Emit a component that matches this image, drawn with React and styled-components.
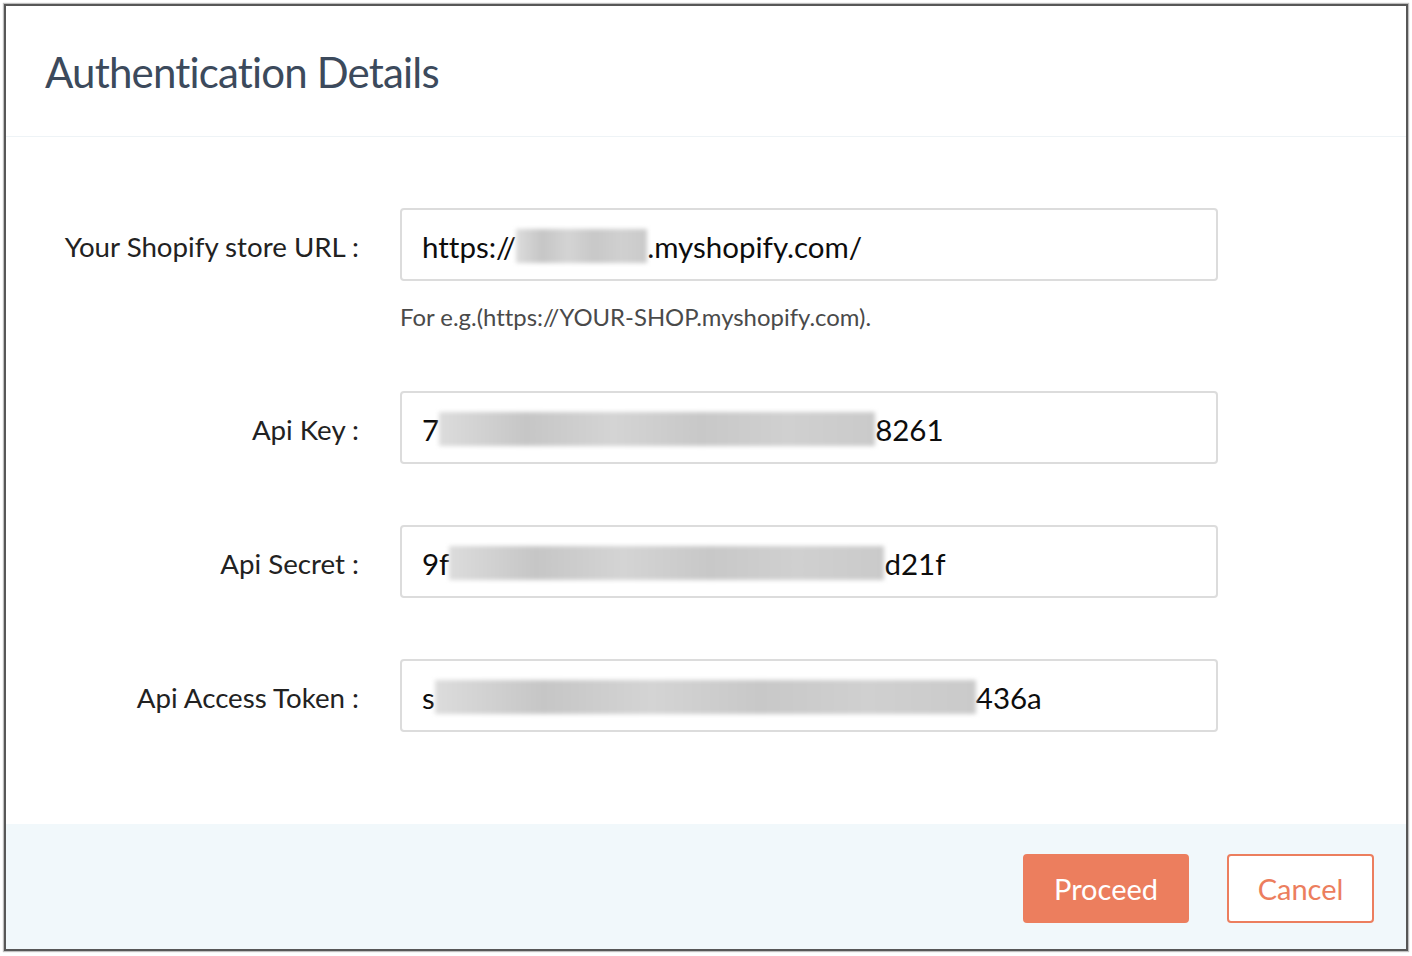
import React from "react";
import styled, { createGlobalStyle } from "styled-components";

const Global = createGlobalStyle`
  html, body { margin: 0; padding: 0; background: #ffffff; }
  body { font-family: Lato, "Open Sans", sans-serif; font-variant-ligatures: none; }
  * { box-sizing: border-box; }
`;

const Page = styled.div`
  width: 1412px;
  height: 956px;
  padding: 4px 4px 5px 4px;
  background: #ffffff;
`;

const Dialog = styled.div`
  height: 100%;
  border: 2px solid #575757;
  box-shadow: 0 0 1px 1px rgba(0, 0, 0, 0.25);
  background: #ffffff;
  display: flex;
  flex-direction: column;
`;

const Header = styled.div`
  height: 131px;
  display: flex;
  align-items: center;
  padding-left: 39px;
  border-bottom: 1px solid #eef3f6;
`;

const Title = styled.h1`
  margin: 0;
  font-family: Lato, sans-serif;
  font-weight: 400;
  font-size: 42px;
  color: #3c4a5c;
  letter-spacing: -0.82px;
  padding-top: 2px;
`;

const Body = styled.div`
  flex: 1;
  padding-top: 71px;
  display: flex;
  flex-direction: column;
  gap: 61px;
`;

const Row = styled.div`
  display: grid;
  grid-template-columns: 353px 818px;
  column-gap: 41px;
  align-items: start;
`;

const Label = styled.label`
  height: 73px;
  display: flex;
  align-items: center;
  justify-content: flex-end;
  font-size: 27.7px;
  color: #222222;
  padding-top: 3px;
`;

const FieldCol = styled.div`
  display: flex;
  flex-direction: column;
`;

const Field = styled.div`
  height: 73px;
  border: 2px solid #dcdcdc;
  border-radius: 4px;
  display: flex;
  align-items: center;
  padding-left: 20px;
  padding-top: 3px;
  font-size: 29.5px;
  color: #0d0d0d;
  white-space: nowrap;
`;

const Blur = styled.span`
  display: inline-block;
  width: ${(p) => p.$w}px;
  height: 34px;
  background: linear-gradient(90deg, #dcdcdc, #c6c6c6 20%, #d4d4d4 40%, #c8c8c8 60%, #d0d0d0 80%, #cacaca);
  filter: blur(2px);
`;

const Hint = styled.div`
  margin-top: 21px;
  margin-bottom: -3px;
  font-size: 23.9px;
  color: #4a4a4a;
  height: 31px;
`;

const Footer = styled.div`
  height: 125px;
  background: #f1f8fb;
  display: flex;
  justify-content: flex-end;
  align-items: flex-start;
  padding: 30px 32px 0 0;
  gap: 38px;
`;

const Button = styled.button`
  height: 69px;
  padding: 0;
  border-radius: 4px;
  border: 2px solid #ec7e5e;
  background: ${(p) => (p.$primary ? "#ec7e5e" : "#ffffff")};
  color: ${(p) => (p.$primary ? "#ffffff" : "#ec7e5e")};
  font-family: Lato, sans-serif;
  font-size: 29px;
  cursor: pointer;
  width: ${(p) => (p.$primary ? 166 : 147)}px;
`;

const rows = [
  { label: "Your Shopify store URL :", pre: "https://", blur: 131, post: ".myshopify.com/", hint: true },
  { label: "Api Key :", pre: "7", blur: 436, post: "8261" },
  { label: "Api Secret :", pre: "9f", blur: 435, post: "d21f" },
  { label: "Api Access Token :", pre: "s", blur: 541, post: "436a" },
];

export default function App() {
  return (
    <>
      <Global />
      <Page>
        <Dialog>
          <Header>
            <Title>Authentication Details</Title>
          </Header>
          <Body>
            {rows.map((r) => (
              <Row key={r.label}>
                <Label>{r.label}</Label>
                <FieldCol>
                  <Field>
                    <span>{r.pre}</span>
                    <Blur $w={r.blur} />
                    <span>{r.post}</span>
                  </Field>
                  {r.hint && <Hint>For e.g.(https://YOUR-SHOP.myshopify.com).</Hint>}
                </FieldCol>
              </Row>
            ))}
          </Body>
          <Footer>
            <Button $primary>Proceed</Button>
            <Button>Cancel</Button>
          </Footer>
        </Dialog>
      </Page>
    </>
  );
}
